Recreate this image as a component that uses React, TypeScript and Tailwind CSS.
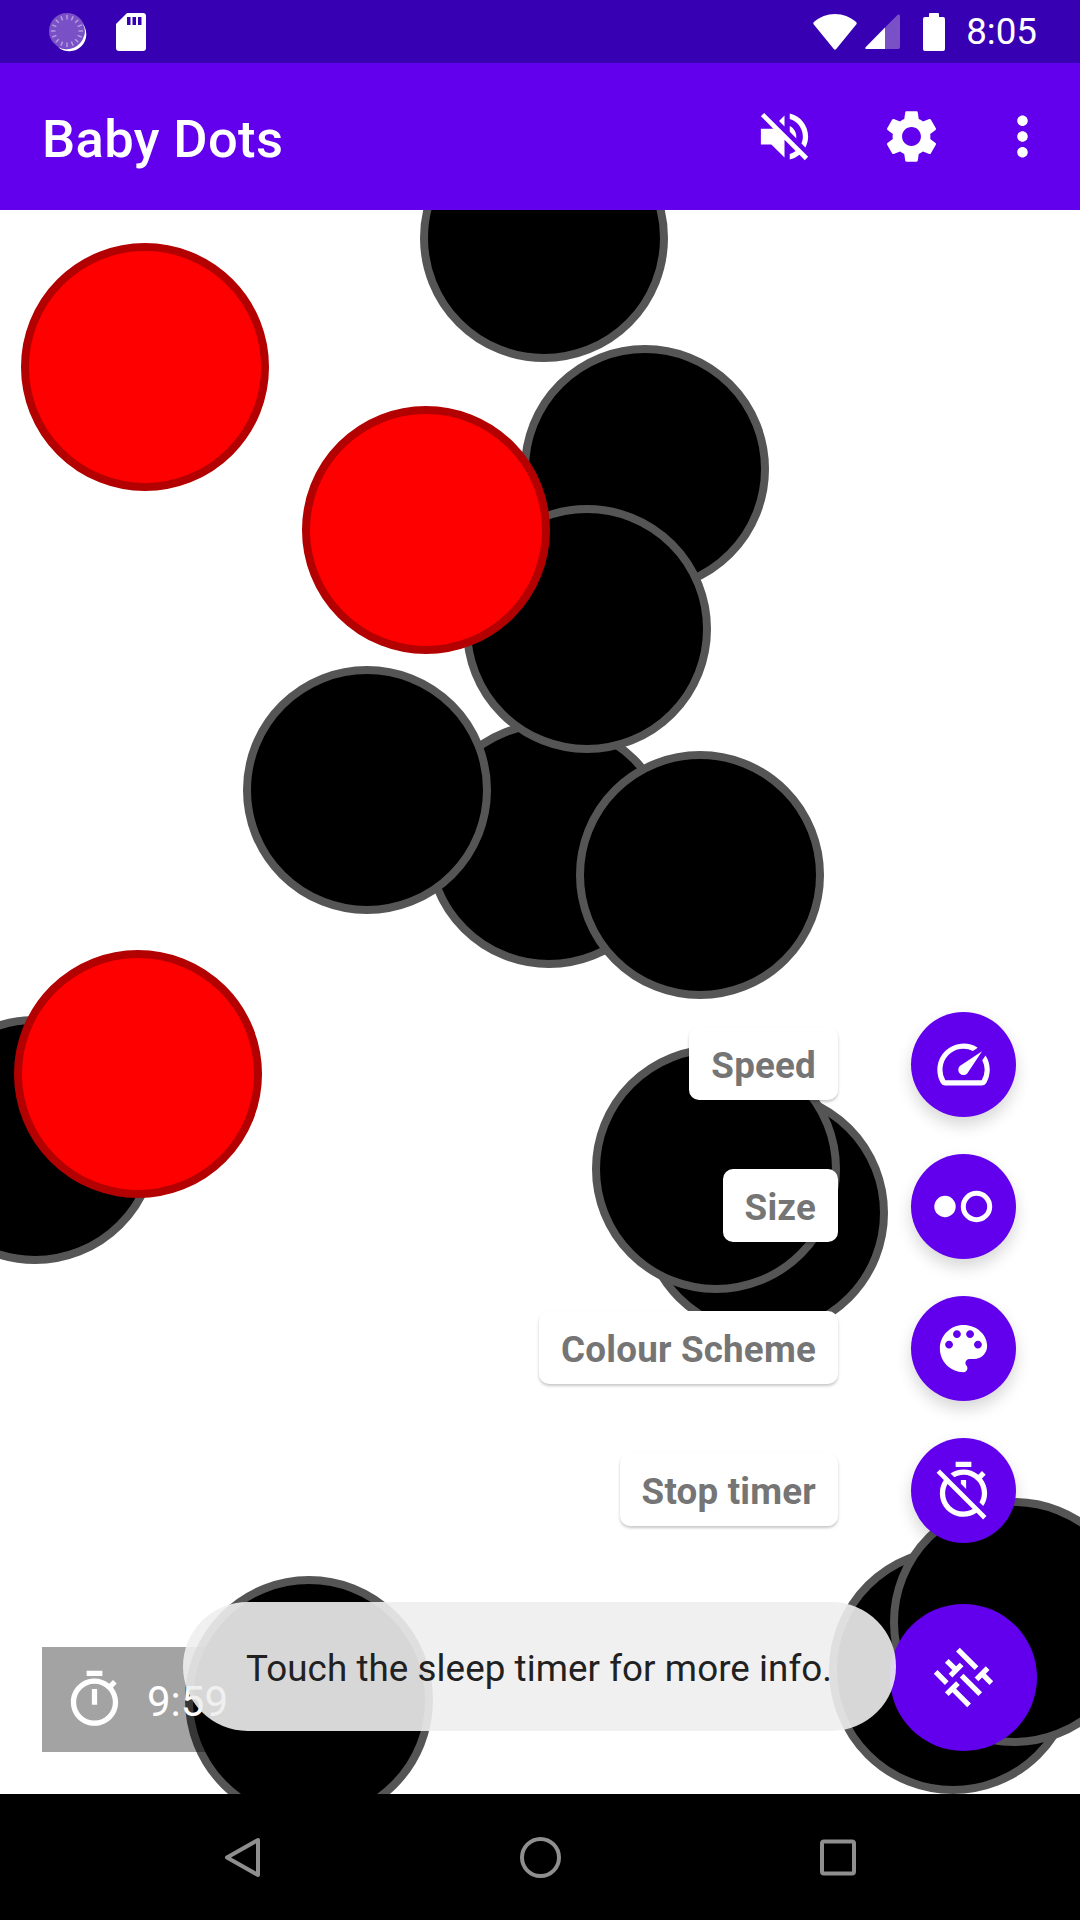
const dots = [
  { x: 420, y: 114, red: false },
  { x: 521, y: 345, red: false },
  { x: 425, y: 720, red: false },
  { x: 463, y: 505, red: false },
  { x: 302, y: 406, red: true },
  { x: 21, y: 243, red: true },
  { x: 243, y: 666, red: false },
  { x: 576, y: 751, red: false },
  { x: -89, y: 1016, red: false },
  { x: 14, y: 950, red: true },
  { x: 640, y: 1089, red: false },
  { x: 592, y: 1045, red: false },
  { x: 829, y: 1546, red: false },
  { x: 890, y: 1498, red: false },
  { x: 185, y: 1576, red: false },
];

const ICONS = {
  volumeOff:
    "M16.5 12c0-1.77-1.02-3.29-2.5-4.03v2.21l2.45 2.45c.03-.2.05-.41.05-.63zm2.5 0c0 .94-.2 1.82-.54 2.64l1.51 1.51C20.63 14.91 21 13.5 21 12c0-4.28-2.99-7.86-7-8.77v2.06c2.89.86 5 3.54 5 6.71zM4.27 3L3 4.27 7.73 9H3v6h4l5 5v-6.73l4.25 4.25c-.67.52-1.42.93-2.25 1.18v2.06c1.38-.31 2.63-.95 3.69-1.81L19.73 21 21 19.73l-9-9L4.27 3zM12 4L9.91 6.09 12 8.18V4z",
  settings:
    "M19.14 12.94c.04-.3.06-.61.06-.94 0-.32-.02-.64-.07-.94l2.03-1.58c.18-.14.23-.41.12-.61l-1.92-3.32c-.12-.22-.37-.29-.59-.22l-2.39.96c-.5-.38-1.03-.7-1.62-.94l-.36-2.54c-.04-.24-.24-.41-.48-.41h-3.84c-.24 0-.43.17-.47.41l-.36 2.54c-.59.24-1.13.57-1.62.94l-2.39-.96c-.22-.08-.47 0-.59.22L2.74 8.87c-.12.21-.08.47.12.61l2.03 1.58c-.05.3-.09.63-.09.94s.02.64.07.94l-2.03 1.58c-.18.14-.23.41-.12.61l1.92 3.32c.12.22.37.29.59.22l2.39-.96c.5.38 1.03.7 1.62.94l.36 2.54c.05.24.24.41.48.41h3.84c.24 0 .44-.17.47-.41l.36-2.54c.59-.24 1.13-.56 1.62-.94l2.39.96c.22.08.47 0 .59-.22l1.92-3.32c.12-.22.07-.47-.12-.61l-2.01-1.58zM12 15.6c-1.98 0-3.6-1.62-3.6-3.6s1.62-3.6 3.6-3.6 3.6 1.62 3.6 3.6-1.62 3.6-3.6 3.6z",
  moreVert:
    "M12 8c1.1 0 2-.9 2-2s-.9-2-2-2-2 .9-2 2 .9 2 2 2zm0 2c-1.1 0-2 .9-2 2s.9 2 2 2 2-.9 2-2-.9-2-2-2zm0 6c-1.1 0-2 .9-2 2s.9 2 2 2 2-.9 2-2-.9-2-2-2z",
  speed:
    "M20.38 8.57l-1.23 1.85a8 8 0 0 1-.22 7.58H5.07A8 8 0 0 1 15.58 6.85l1.85-1.23A10 10 0 0 0 3.35 19a2 2 0 0 0 1.72 1h13.85a2 2 0 0 0 1.74-1 10 10 0 0 0-.27-10.44zM10.59 15.41a2 2 0 0 0 2.83 0l5.66-8.49-8.49 5.66a2 2 0 0 0 0 2.83z",
  palette:
    "M12 3c-4.97 0-9 4.03-9 9s4.03 9 9 9c.83 0 1.5-.67 1.5-1.5 0-.39-.15-.74-.39-1.01-.23-.26-.38-.61-.38-.99 0-.83.67-1.5 1.5-1.5H16c2.76 0 5-2.24 5-5 0-4.42-4.03-8-9-8zm-5.5 9c-.83 0-1.5-.67-1.5-1.5S5.67 9 6.5 9 8 9.67 8 10.5 7.33 12 6.5 12zm3-4C8.67 8 8 7.33 8 6.5S8.67 5 9.5 5s1.5.67 1.5 1.5S10.33 8 9.5 8zm5 0c-.83 0-1.5-.67-1.5-1.5S13.67 5 14.5 5s1.5.67 1.5 1.5S15.33 8 14.5 8zm3 4c-.83 0-1.5-.67-1.5-1.5S16.67 9 17.5 9s1.5.67 1.5 1.5-.67 1.5-1.5 1.5z",
  timerOff:
    "M19.04 4.55l-1.42 1.42C16.07 4.74 14.12 4 12 4c-1.83 0-3.53.55-4.95 1.48l1.46 1.46C9.53 6.35 10.73 6 12 6c3.87 0 7 3.13 7 7 0 1.27-.35 2.47-.94 3.49l1.45 1.45C20.45 16.53 21 14.83 21 13c0-2.12-.74-4.07-1.97-5.61l1.42-1.42-1.41-1.42zM15 1H9v2h6V1zm-4 8.44l2 2V8h-2v1.44zM3.02 4L1.75 5.27 4.5 8.03C3.55 9.45 3 11.16 3 13c0 4.97 4.02 9 8.99 9 1.84 0 3.55-.55 4.98-1.5l2.5 2.5 1.27-1.27-7.71-7.71L3.02 4zM12 20c-3.87 0-7-3.13-7-7 0-1.28.35-2.48.95-3.52l9.56 9.56c-1.03.61-2.23.96-3.51.96z",
  timer:
    "M15 1H9v2h6V1zm-4 13h2V8h-2v6zm8.03-6.61l1.42-1.42c-.43-.51-.9-.99-1.41-1.41l-1.42 1.42C16.07 4.74 14.12 4 12 4c-4.97 0-9 4.03-9 9s4.02 9 9 9 9-4.03 9-9c0-2.12-.74-4.07-1.97-5.61zM12 20c-3.87 0-7-3.13-7-7s3.13-7 7-7 7 3.13 7 7-3.13 7-7 7z",
  tune:
    "M3 17v2h6v-2H3zM3 5v2h10V5H3zm10 16v-2h8v-2h-8v-2h-2v6h2zM7 9v2H3v2h4v2h2V9H7zm14 4v-2H11v2h10zm-6-4h2V7h4V5h-4V3h-2v6z",
};

function Icon({ d, className = "" }: { d: string; className?: string }) {
  return (
    <svg viewBox="0 0 24 24" className={`w-[63px] h-[63px] shrink-0 fill-white ${className}`}>
      <path d={d} />
    </svg>
  );
}

function SizeIcon() {
  return (
    <svg viewBox="0 0 63 63" className="w-[63px] h-[63px] shrink-0">
      <circle cx="13" cy="31.5" r="10.7" fill="#fff" />
      <circle cx="44.5" cy="31.5" r="13.2" fill="none" stroke="#fff" strokeWidth="5" />
    </svg>
  );
}

function Spinner() {
  const ticks = Array.from({ length: 16 }, (_, i) => (i * 360) / 16);
  return (
    <svg viewBox="0 0 40 40" className="w-[40px] h-[40px]">
      <circle cx="19" cy="19" r="18" fill="#7a50c6" />
      {ticks.map((a) => (
        <line
          key={a}
          x1="19"
          y1="3"
          x2="19"
          y2="7.5"
          stroke="#b7a0e0"
          strokeWidth="1.4"
          transform={`rotate(${a} 19 19)`}
        />
      ))}
      <path d="M34 11 A17 17 0 0 1 10 35 A18 18 0 0 0 36 24 A14 14 0 0 0 34 11Z" fill="#fff" />
    </svg>
  );
}

function SdCard() {
  return (
    <svg viewBox="0 0 30 38" className="w-[30px] h-[38px]">
      <path d="M11 0H27a3 3 0 0 1 3 3V35a3 3 0 0 1-3 3H3a3 3 0 0 1-3-3V11Z" fill="#fff" />
      <rect x="11" y="4" width="3.5" height="8" fill="#3700B3" />
      <rect x="16.5" y="4" width="3.5" height="8" fill="#3700B3" />
      <rect x="22" y="4" width="3.5" height="8" fill="#3700B3" />
    </svg>
  );
}

function Wifi() {
  return (
    <svg viewBox="0 0 44 36" className="w-[44px] h-[36px]">
      <path
        d="M23.2 35 Q22 36.6 20.8 35 L0.8 10.6 Q-0.4 9 1.2 7.8 C7 3 14 0 22 0 C30 0 37 3 42.8 7.8 Q44.4 9 43.2 10.6 Z"
        fill="#fff"
      />
    </svg>
  );
}

function Signal() {
  return (
    <svg viewBox="0 0 35 35" className="w-[35px] h-[35px]">
      <path d="M33 0.5 Q35 0 35 2 V33 Q35 35 33 35 H20 V13.5 Z" fill="#7a50c6" />
      <path d="M20 13.5 V35 H1.5 Q-0.8 35 0.8 33 Z" fill="#fff" />
    </svg>
  );
}

function Battery() {
  return (
    <svg viewBox="0 0 22 38" className="w-[22px] h-[38px]">
      <path
        d="M6 4V1a1 1 0 0 1 1-1h8a1 1 0 0 1 1 1v3h4a2 2 0 0 1 2 2v30a2 2 0 0 1-2 2H2a2 2 0 0 1-2-2V6a2 2 0 0 1 2-2Z"
        fill="#fff"
      />
    </svg>
  );
}

function DialRow({ label, children }: { label: string; children: React.ReactNode }) {
  return (
    <div className="flex items-center gap-[73px] mr-[21px]">
      <div className="h-[73px] mb-[2px] px-[22px] pt-[4px] flex items-center bg-white rounded-[10px] shadow-[0_2px_3px_rgba(0,0,0,0.22)] text-[36.75px] tracking-[0.2px] font-bold text-[#757575]">
        {label}
      </div>
      <div className="w-[105px] h-[105px] rounded-full bg-[#6200EE] flex items-center justify-center shadow-[0_8px_16px_rgba(0,0,0,0.16)]">
        {children}
      </div>
    </div>
  );
}

export default function App() {
  return (
    <div className="w-[1080px] h-[1920px] flex flex-col bg-white overflow-hidden font-['Roboto',sans-serif]">
      {/* status bar */}
      <div className="h-[63px] shrink-0 bg-[#3700B3] flex items-center text-white pl-[48px] pr-[43px]">
        <Spinner />
        <div className="ml-[28px]">
          <SdCard />
        </div>
        <div className="ml-auto flex items-center">
          <Wifi />
          <div className="ml-[8px]">
            <Signal />
          </div>
          <div className="ml-[23px]">
            <Battery />
          </div>
          <span className="ml-[21px] mt-[2px] text-[36.75px] leading-none">8:05</span>
        </div>
      </div>

      {/* app bar */}
      <div className="h-[147px] shrink-0 bg-[#6200EE] flex items-center pl-[42px] pr-[26px]">
        <h1 className="mt-[5px] text-[52.5px] tracking-[0.37px] font-medium text-white leading-none">Baby Dots</h1>
        <div className="ml-auto flex items-center">
          <Icon d={ICONS.volumeOff} />
          <Icon d={ICONS.settings} className="ml-[64px]" />
          <Icon d={ICONS.moreVert} className="ml-[48px]" />
        </div>
      </div>

      {/* canvas */}
      <div className="relative flex-1 overflow-hidden">
        {dots.map((dot, i) => (
          <div
            key={i}
            className={`absolute w-[247.5px] h-[247.5px] rounded-full border-[8px] ${
              dot.red ? "bg-[#ff0000] border-[#b30000]" : "bg-black border-[#555555]"
            }`}
            style={{ left: dot.x, top: dot.y - 210 }}
          />
        ))}

        {/* sleep timer */}
        <div className="absolute left-[42px] bottom-[42px] h-[105px] pl-[21px] pr-[21px] flex items-center gap-[21px] bg-black/36">
          <Icon d={ICONS.timer} />
          <span className="text-[42px] text-white leading-none mt-[5px]">9:59</span>
        </div>

        {/* speed dial */}
        <div className="absolute right-[43px] bottom-[43px] flex flex-col items-end">
          <div className="flex flex-col items-end gap-[37px]">
            <DialRow label="Speed">
              <Icon d={ICONS.speed} />
            </DialRow>
            <DialRow label="Size">
              <SizeIcon />
            </DialRow>
            <DialRow label="Colour Scheme">
              <Icon d={ICONS.palette} />
            </DialRow>
            <DialRow label="Stop timer">
              <Icon d={ICONS.timerOff} />
            </DialRow>
          </div>
          <div className="mt-[61px] w-[147px] h-[147px] rounded-full bg-[#6200EE] flex items-center justify-center">
            <Icon d={ICONS.tune} className="rotate-45" />
          </div>
        </div>

        {/* toast */}
        <div className="absolute left-[183px] bottom-[63px] h-[129px] pl-[63px] pr-[64px] pt-[5px] flex items-center rounded-[65px] bg-[#eeeeee]/90 text-[36.75px] tracking-[0.07px] text-[#212121] whitespace-nowrap">
          Touch the sleep timer for more info.
        </div>
      </div>

      {/* nav bar */}
      <div className="h-[126px] shrink-0 bg-black flex items-center justify-center gap-[235px]">
        <svg viewBox="0 0 63 63" className="w-[63px] h-[63px]">
          <path
            d="M47 14 V49 L16 31.5 Z"
            fill="none"
            stroke="#8f8f8f"
            strokeWidth="4"
            strokeLinejoin="round"
          />
        </svg>
        <svg viewBox="0 0 63 63" className="w-[63px] h-[63px]">
          <circle cx="31.5" cy="31.5" r="18.5" fill="none" stroke="#8f8f8f" strokeWidth="4" />
        </svg>
        <svg viewBox="0 0 63 63" className="w-[63px] h-[63px]">
          <rect x="15" y="15.5" width="32" height="32" rx="2" fill="none" stroke="#8f8f8f" strokeWidth="4" />
        </svg>
      </div>
    </div>
  );
}
